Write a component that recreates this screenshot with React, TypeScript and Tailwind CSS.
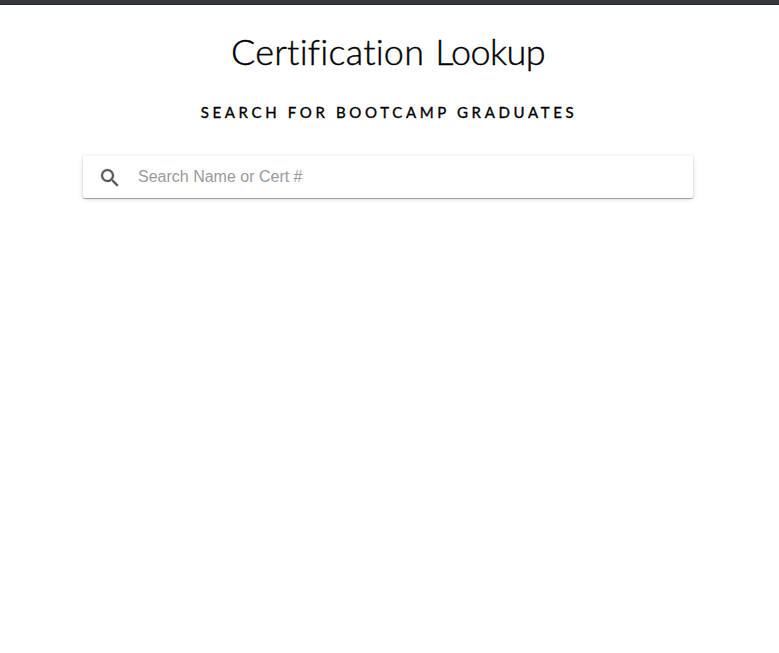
export default function App() {
  return (
    <div className="min-h-[653px] bg-white text-black">
      <header className="h-[5px] border-b border-[#252629] bg-[#36373a]" />
      <main className="ml-[83px] flex w-[610px] flex-col items-center">
        <h1 className="mt-[22px] h-[48px] whitespace-nowrap font-['Lato',sans-serif] text-[36px] font-light leading-[48px] tracking-[0.2px] [font-variant-ligatures:none] [-webkit-text-stroke:0.4px_black] [word-spacing:1px]">
          Certification <span className="tracking-[-0.6px]">Lookup</span>
        </h1>
        <h2 className="mt-[27px] h-5 whitespace-nowrap pl-[2px] font-['Lato',sans-serif] text-[15px] font-normal leading-5 tracking-[3.65px] [-webkit-text-stroke:0.35px_black]">
          SEARCH FOR BOOTCAMP GRADUATES
        </h2>
        <label className="mt-[34px] flex h-[42px] w-full items-center rounded-[2px] bg-white pl-[15px] shadow-[0_1px_1px_0_rgba(60,64,67,0.45),0_1px_5px_0_rgba(60,64,67,0.2)]">
          <svg viewBox="0 0 24 24" className="mt-px size-6 fill-[#54585c] stroke-[#54585c] stroke-[0.3]">
            <path d="M15.5 14h-.79l-.28-.27A6.471 6.471 0 0 0 16 9.5 6.5 6.5 0 1 0 9.5 16c1.61 0 3.09-.59 4.23-1.57l.27.28v.79l5 4.99L20.49 19l-4.99-5zm-6 0C7.01 14 5 11.99 5 9.5S7.01 5 9.5 5 14 7.01 14 9.5 11.99 14 9.5 14z" />
          </svg>
          <input
            type="text"
            placeholder="Search Name or Cert #"
            className="ml-4 h-full flex-1 bg-transparent font-['Liberation_Sans',sans-serif] text-base outline-none placeholder:text-[#999b9d]"
          />
        </label>
      </main>
    </div>
  );
}
